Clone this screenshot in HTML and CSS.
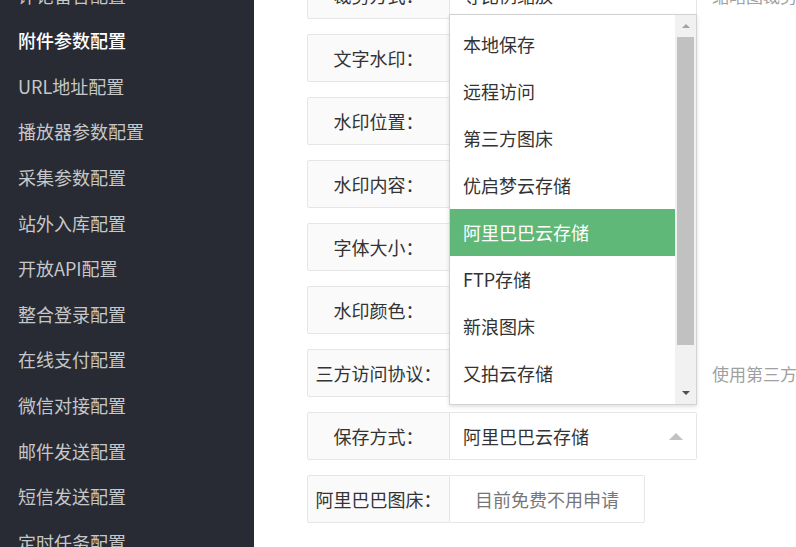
FILE: index.html
```html
<!DOCTYPE html>
<html lang="zh-CN">
<head>
<meta charset="utf-8">
<title>附件参数配置</title>
<link rel="stylesheet" href="styles.css">
</head>
<body>
<div class="app">
  <aside class="sidebar">
    <ul class="nav">
      <li>评论留言配置</li>
      <li class="active">附件参数配置</li>
      <li>URL地址配置</li>
      <li>播放器参数配置</li>
      <li>采集参数配置</li>
      <li>站外入库配置</li>
      <li>开放API配置</li>
      <li>整合登录配置</li>
      <li>在线支付配置</li>
      <li>微信对接配置</li>
      <li>邮件发送配置</li>
      <li>短信发送配置</li>
      <li>定时任务配置</li>
    </ul>
  </aside>
  <main class="main">
    <div class="form">
      <div class="row">
        <div class="label">裁剪方式：</div>
        <div class="input select"><span>等比例缩放</span><i class="caret down"></i></div>
        <div class="hint">缩略图裁剪方式说明</div>
      </div>
      <div class="row">
        <div class="label">文字水印：</div>
        <div class="input"></div>
      </div>
      <div class="row">
        <div class="label">水印位置：</div>
        <div class="input"></div>
      </div>
      <div class="row">
        <div class="label">水印内容：</div>
        <div class="input"></div>
      </div>
      <div class="row">
        <div class="label">字体大小：</div>
        <div class="input"></div>
      </div>
      <div class="row">
        <div class="label">水印颜色：</div>
        <div class="input"></div>
      </div>
      <div class="row">
        <div class="label">三方访问协议：</div>
        <div class="input"></div>
        <div class="hint">使用第三方图床时的访问协议</div>
      </div>
      <div class="row">
        <div class="label">保存方式：</div>
        <div class="input select open">
          <span>阿里巴巴云存储</span><i class="caret up"></i>
          <div class="dropdown">
            <ul class="options">
              <li>本地保存</li>
              <li>远程访问</li>
              <li>第三方图床</li>
              <li>优启梦云存储</li>
              <li class="selected">阿里巴巴云存储</li>
              <li>FTP存储</li>
              <li>新浪图床</li>
              <li>又拍云存储</li>
            </ul>
            <div class="scrollbar">
              <div class="sb-btn"><i class="sb-up"></i></div>
              <div class="sb-track"><div class="sb-thumb"></div></div>
              <div class="sb-btn"><i class="sb-down"></i></div>
            </div>
          </div>
        </div>
      </div>
      <div class="row">
        <div class="label">阿里巴巴图床：</div>
        <div class="input short">目前免费不用申请</div>
      </div>
    </div>
  </main>
</div>
</body>
</html>
```

FILE: styles.css
```css
* { box-sizing: border-box; }
html, body { margin: 0; padding: 0; }
body {
  font-family: "Noto Sans CJK SC", "Noto Sans", "Liberation Sans", sans-serif;
  background: #fff;
  color: #333;
}
.app {
  display: flex;
  width: 796px;
  height: 547px;
  overflow: hidden;
}
.sidebar {
  width: 254px;
  flex: none;
  background: #282b33;
  overflow: hidden;
}
.nav {
  list-style: none;
  margin: -27.4px 0 0;
  padding: 0;
}
.nav li {
  height: 45.6px;
  line-height: 45.6px;
  padding-left: 18px;
  font-size: 18px;
  color: #c6c7c9;
  white-space: nowrap;
}
.nav li.active {
  color: #fff;
  font-weight: 500;
}
.main {
  flex: 1;
  padding-left: 53px;
  overflow: hidden;
}
.form {
  margin-top: -29px;
}
.row {
  display: flex;
  align-items: center;
  height: 48px;
  margin-bottom: 15px;
}
.label {
  width: 143px;
  height: 48px;
  flex: none;
  border: 1px solid #e6e6e6;
  border-radius: 2px 0 0 2px;
  background: #fafafa;
  text-align: center;
  line-height: 46px;
  font-size: 18px;
  color: #333;
  white-space: nowrap;
}
.input {
  position: relative;
  width: 247px;
  height: 48px;
  flex: none;
  border: 1px solid #e6e6e6;
  border-left: none;
  border-radius: 0 2px 2px 0;
  background: #fff;
  font-size: 18px;
  line-height: 46px;
}
.input.short {
  width: 195px;
  text-align: center;
  color: #777;
}
.select span {
  padding-left: 13px;
  color: #333;
}
.caret {
  position: absolute;
  right: 13px;
  top: 20px;
  width: 0;
  height: 0;
  border-left: 7px solid transparent;
  border-right: 7px solid transparent;
}
.caret.up {
  border-bottom: 7px solid #c2c2c2;
}
.caret.down {
  border-top: 7px solid #c2c2c2;
}
.hint {
  margin-left: 15px;
  font-size: 17px;
  color: #a0a0a0;
  white-space: nowrap;
}
.dropdown {
  position: absolute;
  left: -1px;
  bottom: calc(100% + 8px);
  width: 248px;
  height: 391px;
  display: flex;
  border: 1px solid #d2d2d2;
  background: #fff;
  box-shadow: 0 2px 4px rgba(0, 0, 0, 0.12);
  z-index: 10;
}
.options {
  flex: 1;
  list-style: none;
  margin: 0;
  padding: 6px 0 0;
  overflow: hidden;
}
.options li {
  height: 47px;
  line-height: 47px;
  padding-left: 13px;
  font-size: 18px;
  color: #333;
  white-space: nowrap;
}
.options li.selected {
  background: #5fb878;
  color: #fff;
}
.scrollbar {
  width: 21px;
  flex: none;
  display: flex;
  flex-direction: column;
  background: #f1f1f1;
}
.sb-btn {
  height: 22px;
  display: flex;
  align-items: center;
  justify-content: center;
}
.sb-up {
  width: 0;
  height: 0;
  border-left: 4px solid transparent;
  border-right: 4px solid transparent;
  border-bottom: 4px solid #a3a3a3;
}
.sb-down {
  width: 0;
  height: 0;
  border-left: 4px solid transparent;
  border-right: 4px solid transparent;
  border-top: 4px solid #505050;
}
.sb-track {
  flex: 1;
  padding: 0 2px;
}
.sb-thumb {
  height: 308px;
  background: #c1c1c1;
}
```
